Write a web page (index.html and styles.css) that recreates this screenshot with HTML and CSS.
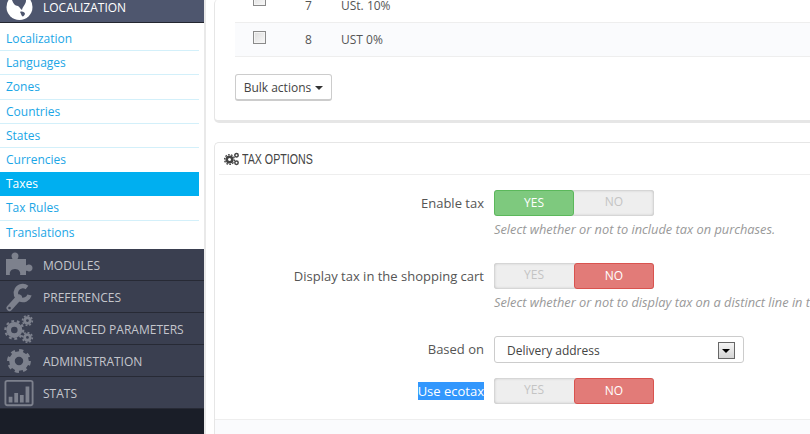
FILE: index.html
```html
<!DOCTYPE html>
<html lang="en">
<head>
<meta charset="utf-8">
<title>Taxes</title>
<link rel="stylesheet" href="styles.css">
</head>
<body>
<div class="app">
  <nav class="sidebar">
    <div class="head">
      <svg class="globe" viewBox="0 0 40 26"><circle cx="19.5" cy="7" r="13" fill="#fff"/><path fill="#4e566e" d="M12 0c1 3 3 6 6 6 2 1 2 3 4 4 0-2 2-4 3-6 1-2 1-3 1-4zM20 12c2-1 5 0 5 2-1 2-2 3-3 2s-1-3-2-4z"/></svg>
      <span class="top-label">LOCALIZATION</span>
    </div>
    <ul class="sub">
      <li>Localization</li>
      <li>Languages</li>
      <li>Zones</li>
      <li>Countries</li>
      <li>States</li>
      <li>Currencies</li>
      <li class="active">Taxes</li>
      <li>Tax Rules</li>
      <li>Translations</li>
    </ul>
    <div class="menu">
      <svg class="ico" viewBox="0 0 30 30"><path fill="#7d818d" d="M2 9h6.5c-.5-1-1-2-1-3 0-2 1.5-3.5 3.5-3.5s3.5 1.5 3.5 3.5c0 1-.5 2-1 3H22v6c1 .7 1.5-.5 3-.5 2 0 3.5 1.5 3.5 3.5s-1.500 3.500-3.500 3.500c-1.500 0-2-1.200-3-.5V25h-6c.5-1 .5-6-5-6s-5.500 5-5 6H2z"/></svg>
      <span>MODULES</span>
    </div>
    <div class="menu">
      <svg class="ico" viewBox="0 0 30 30"><g fill="none" stroke="#7d818d" stroke-linecap="round"><path d="M5.500 26 15 15.500" stroke-width="6"/><path d="M23 5.500A7 7 0 1 0 25.500 13" stroke-width="4.500" stroke-linecap="butt"/></g><circle cx="5.500" cy="26" r="1.300" fill="#3a3f50"/></svg>
      <span>PREFERENCES</span>
    </div>
    <div class="menu">
      <svg class="ico" viewBox="0 0 32 32"><g fill="none" stroke="#7d818d"><circle cx="11" cy="17" r="6" stroke-width="5"/><circle cx="11" cy="17" r="9.500" stroke-width="2.400" stroke-dasharray="3 2.900"/><circle cx="25" cy="7" r="3" stroke-width="3"/><circle cx="25" cy="7" r="5.200" stroke-width="1.800" stroke-dasharray="2 2"/><circle cx="25" cy="25" r="3" stroke-width="3"/><circle cx="25" cy="25" r="5.200" stroke-width="1.800" stroke-dasharray="2 2"/></g></svg>
      <span>ADVANCED PARAMETERS</span>
    </div>
    <div class="menu">
      <svg class="ico" viewBox="0 0 32 32"><g fill="none" stroke="#7d818d"><circle cx="16" cy="16" r="7.500" stroke-width="6"/><circle cx="16" cy="16" r="11" stroke-width="3.400" stroke-dasharray="4.400 4.200"/></g></svg>
      <span>ADMINISTRATION</span>
    </div>
    <div class="menu">
      <svg class="ico" viewBox="0 0 32 32"><rect x="1.500" y="3" width="29" height="26" rx="2" fill="none" stroke="#7d818d" stroke-width="2"/><path fill="#7d818d" d="M5 20h4v6H5zM11 16h4v10h-4zM17 18h4v8h-4zM23 9h4v17h-4z"/></svg>
      <span>STATS</span>
    </div>
  </nav>
  <main class="content">
    <section class="card list">
      <div class="row">
        <span class="check"></span><span class="num">7</span><span class="name">USt. 10%</span>
      </div>
      <div class="row alt">
        <span class="check"></span><span class="num">8</span><span class="name">UST 0%</span>
      </div>
      <button class="bulk" type="button">Bulk actions <i class="caret"></i></button>
    </section>
    <section class="card options">
      <h2 class="title">
        <svg class="title-ico" viewBox="0 0 16 14"><g fill="none" stroke="#444"><circle cx="5.500" cy="7.500" r="2.800" stroke-width="2.600"/><circle cx="5.500" cy="7.500" r="4.900" stroke-width="1.400" stroke-dasharray="1.700 1.300"/><circle cx="12.500" cy="3.200" r="1.700" stroke-width="1.500"/><circle cx="12.500" cy="10.800" r="1.700" stroke-width="1.500"/></g></svg>
        <span class="title-text">TAX OPTIONS</span>
      </h2>
      <div class="field first">
        <label class="lbl">Enable tax</label>
        <div class="switch"><span class="on-yes">YES</span><span>NO</span></div>
      </div>
      <p class="help">Select whether or not to include tax on purchases.</p>
      <div class="field second">
        <label class="lbl">Display tax in the shopping cart</label>
        <div class="switch"><span>YES</span><span class="on-no">NO</span></div>
      </div>
      <p class="help">Select whether or not to display tax on a distinct line in the cart.</p>
      <div class="field third">
        <label class="lbl">Based on</label>
        <div class="select">Delivery address<i class="arrow"></i></div>
      </div>
      <div class="field fourth">
        <label class="lbl"><span class="sel">Use ecotax</span></label>
        <div class="switch"><span>YES</span><span class="on-no">NO</span></div>
      </div>
      <div class="foot"></div>
    </section>
  </main>
</div>
</body>
</html>
```
FILE: styles.css
```css
* { box-sizing: border-box; }
html, body { margin: 0; height: 100%; overflow: hidden; }
body { background: #fff; font-family: "Open Sans", sans-serif; font-size: 12px; color: #555; }
.app { display: flex; width: 810px; height: 434px; overflow: hidden; }

.sidebar { width: 204px; flex: none; height: 434px; background: #1a1e28; overflow: hidden; }
.head { height: 23px; background: #4e566e; border-bottom: 1px solid #23262f; display: flex; align-items: center; position: relative; overflow: hidden; }
.globe { position: absolute; left: 0; top: 0; width: 40px; height: 26px; }
.top-label { margin-left: 43px; margin-top: -7px; font-size: 12px; color: #fff; position: relative; }
.sub { list-style: none; margin: 0; padding: 4px 5px 5px 0; background: #fff; height: 226px; }
.sub li { height: 24.2px; line-height: 23px; padding-left: 6px; color: #1ba6e6; font-size: 12px; border-bottom: 1px solid #d3f0fa; }
.sub li:nth-child(6), .sub li:nth-child(9) { border-bottom: 0; }
.sub li.active { background: #00aff0; color: #fff; border-bottom: 0; }
.menu { height: 32px; padding-top: 2px; background: #3a3f50; border-bottom: 1px solid #272a35; display: flex; align-items: center; position: relative; color: #c4c6cc; font-size: 12px; }
.menu span { margin-left: 43px; }
.ico { position: absolute; left: 4px; top: 1px; width: 30px; height: 30px; }

.content { flex: 1; min-width: 0; border-left: 2px solid #e9e9e9; padding-left: 8px; }
.card { background: #fff; border: 1px solid #e6e6e6; border-right: 0; border-radius: 5px 0 0 5px; }
.list { height: 124px; margin-top: -1px; padding: 0 0 0 20px; border-top: 0; border-bottom: 3px solid #e6e6e6; }
.row { display: flex; height: 34px; align-items: center; border-bottom: 1px solid #eee; }
.row:first-child { height: 24px; align-items: flex-end; padding-bottom: 8px; }
.row:first-child .check { margin-bottom: 8px; }
.row.alt { background: #fafbfd; padding-bottom: 1px; }
.row.alt .check { margin-bottom: 3px; }
.check { width: 13px; height: 13px; margin-left: 18px; border: 1px solid #8a8a8a; background: linear-gradient(135deg, #ddd, #f8f8f8); box-shadow: inset 0 0 0 1px #f4f4f4; }
.num { width: 12px; margin-left: 39px; font-size: 12px; }
.name { margin-left: 24px; font-size: 12px; }
.bulk { display: block; margin-top: 17px; height: 27px; width: 97px; padding: 0; background: #fff; border: 1px solid #ccc; border-bottom-width: 2px; border-radius: 3px; font: 12px "Open Sans", sans-serif; color: #444; }
.caret { display: inline-block; width: 0; height: 0; border: 4px solid transparent; border-top-color: #333; border-bottom: 0; vertical-align: 2px; margin-left: 1px; }

.options { margin-top: 19px; height: 300px; }
.title { display: flex; align-items: center; height: 32px; margin: 0 0 0 4px; padding-left: 5px; border-bottom: 1px solid #eee; font: 400 14px "Liberation Sans", sans-serif; color: #444; }
.title-ico { width: 16px; height: 14px; margin-right: 2px; flex: none; }
.title-text { transform: scaleX(.76); transform-origin: left center; white-space: nowrap; }
.field { display: flex; align-items: center; height: 26px; }
.lbl { width: 269px; text-align: right; font-size: 13px; color: #555; flex: none; }
.sel { background: #3297fd; color: #fff; }
.switch { margin-left: 10px; width: 160px; height: 26px; display: flex; background: #eee; border-radius: 3px; box-shadow: inset 0 0 3px #aaa; font-size: 12px; color: #c4c4c4; }
.switch span { flex: 0 0 80px; text-align: center; line-height: 24px; }
.switch .on-yes { background: #7ec97e; border: 1px solid #5bb85b; color: #fff; border-radius: 3px; }
.switch .on-no { background: #e27b78; border: 1px solid #d9534f; color: #fff; border-radius: 3px; }
.help { margin: 5px 0 0 279px; font-size: 12.8px; font-style: italic; color: #999; white-space: nowrap; height: 17px; line-height: 16px; }
.first { margin-top: 15px; }
.second { margin-top: 25px; }
.third { margin-top: 25px; }
.fourth { margin-top: 16px; }
.select { margin-left: 10px; width: 250px; height: 27px; border: 1px solid #ccc; border-radius: 3px; padding-left: 12px; line-height: 27px; font-size: 12px; color: #444; position: relative; background: #fff; }
.arrow { position: absolute; right: 8px; top: 5px; width: 17px; height: 17px; border: 1px solid #666; background: linear-gradient(#f4f4f4, #d4d4d4); }
.arrow::after { content: ""; position: absolute; left: 3px; top: 6px; border: 4px solid transparent; border-top: 4px solid #000; border-bottom: 0; }
.foot { margin-top: 15px; height: 30px; border-top: 1px solid #eee; background: #fafbfd; }
```
